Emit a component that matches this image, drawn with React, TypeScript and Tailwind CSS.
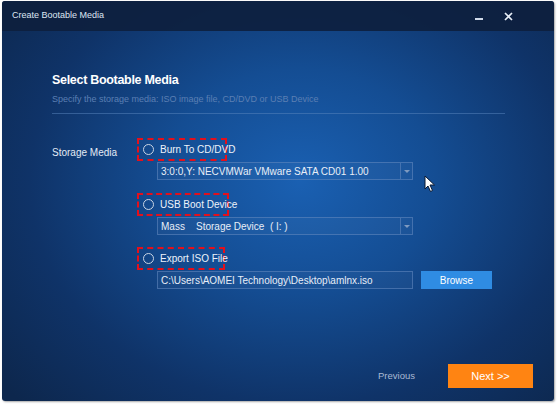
import React from "react";

function Radio({ label, w }: { label: string; w: string }) {
  return (
    <div className={`flex h-[23px] items-center whitespace-nowrap border-2 border-dashed border-[#e3101c] pl-[4px] ${w}`}>
      <span className="h-[11px] w-[11px] shrink-0 rounded-full border border-[#c9d4e4]" />
      <span className="ml-[6px] text-[10px] text-[#eef3fa]">{label}</span>
    </div>
  );
}

function Select({ value }: { value: string }) {
  return (
    <div className="ml-[20px] flex h-[18px] w-[256px] items-center border border-[#5f86bd]/60 bg-white/[0.03]">
      <span className="flex-1 pl-[3px] text-[10px] text-[#e8eef7] whitespace-pre">{value}</span>
      <span className="flex h-full w-[12px] items-center justify-center border-l border-[#5f86bd]/60">
        <span className="h-0 w-0 border-x-[3px] border-t-[3px] border-x-transparent border-t-[#7f9ac0]" />
      </span>
    </div>
  );
}

export default function App() {
  return (
    <div className="h-[404px] w-[557px] bg-white" style={{ fontFamily: '"Liberation Sans", Arial, sans-serif' }}>
      <div className="relative ml-[2px] mt-[1px] flex h-[400px] w-[552px] flex-col overflow-hidden rounded-[3px] bg-[radial-gradient(ellipse_70%_80%_at_54%_45%,#1a60b2_0%,#144d93_35%,#0f3368_70%,#0d274d_100%)] shadow-[1px_1px_2px_rgba(0,0,0,0.35)]">
        {/* title bar */}
        <div className="flex h-[30px] items-center bg-[#0d1f3d]/90 pl-[10px] pr-[41px]">
          <span className="text-[9px] text-[#dde6f2]">Create Bootable Media</span>
          <div className="ml-auto flex items-center gap-[21px]">
            <span className="mt-[6px] h-[2px] w-[8px] bg-[#cfd9e8]" />
            <svg width="9" height="9" viewBox="0 0 9 9">
              <path d="M1 1L8 8M8 1L1 8" stroke="#e6edf6" strokeWidth="1.7" />
            </svg>
          </div>
        </div>

        {/* heading */}
        <div className="pl-[50px] pt-[41px]">
          <div className="text-[12.5px] font-bold leading-[16px] tracking-[-0.3px] text-white">Select Bootable Media</div>
          <div className="mt-[5px] text-[9px] leading-[12px] text-[#5b7fb3]">
            Specify the storage media: ISO image file, CD/DVD or USB Device
          </div>
          <div className="mt-[8px] h-px w-[453px] bg-[#5a85bd]/50" />
        </div>

        {/* options */}
        <div className="mt-[24px] flex pl-[50px]">
          <div className="w-[85px] pt-[7px] text-[10px] text-[#e4ebf5]">Storage Media</div>
          <div className="flex flex-col">
            <Radio label="Burn To CD/DVD" w="w-[90px]" />
            <div className="mt-[1px]">
              <Select value="3:0:0,Y: NECVMWar VMware SATA CD01 1.00" />
            </div>
            <div className="mt-[13px]">
              <Radio label="USB Boot Device" w="w-[92px]" />
            </div>
            <div className="mt-[1px]">
              <Select value="Mass    Storage Device  ( I: )" />
            </div>
            <div className="mt-[12px]">
              <Radio label="Export ISO File" w="w-[88px]" />
            </div>
            <div className="mt-[1px] flex items-center">
              <div className="ml-[20px] flex h-[18px] w-[256px] items-center border border-[#5f86bd]/60 bg-white/[0.03] pl-[3px] text-[10px] text-[#e8eef7]">
                C:\Users\AOMEI Technology\Desktop\amlnx.iso
              </div>
              <button className="ml-[8px] flex h-[18px] w-[71px] items-center justify-center bg-[#2f8ce3] text-[10px] text-white">
                Browse
              </button>
            </div>
          </div>
        </div>

        {/* footer */}
        <div className="mt-auto mb-[13px] flex items-center justify-end pr-[21px]">
          <span className="text-[9.5px] text-[#a9bad3]">Previous</span>
          <button className="ml-[33px] flex h-[24px] w-[85px] items-center justify-center bg-[#ff8412] text-[11px] text-white">
            Next &gt;&gt;
          </button>
        </div>

        {/* mouse cursor */}
        <svg className="absolute left-[422px] top-[174px]" width="12" height="18" viewBox="0 0 12 18">
          <path d="M1 1L1 14L4 11L6.5 16.5L8.5 15.5L6 10L10.5 10Z" fill="#ffffff" stroke="#0b1a33" strokeWidth="1" strokeLinejoin="round" />
        </svg>
      </div>
    </div>
  );
}
